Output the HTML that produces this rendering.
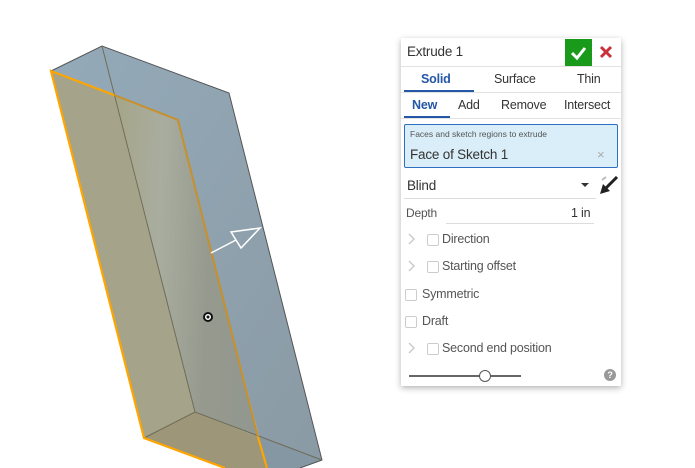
<!DOCTYPE html>
<html><head><meta charset="utf-8"><style>
body{margin:0;width:695px;height:468px;background:#fff;overflow:hidden;position:relative;font-family:"Liberation Sans",sans-serif;}
svg.scene{position:absolute;left:0;top:0}
.panel{position:absolute;left:401px;top:38px;width:220px;height:348px;background:#fff;box-shadow:0 2px 6px rgba(0,0,0,.3);font-size:12.5px;color:#333;letter-spacing:-0.2px}
.abs{position:absolute}
.cb{position:absolute;width:10px;height:10px;border:1px solid #ccc;border-radius:2px;background:#fff}
.g{color:#555}
.chev{position:absolute;width:10px;height:12px}
</style></head><body>
<svg class="scene" width="400" height="468" viewBox="0 0 400 468">
<defs>
<linearGradient id="blue" x1="0" y1="0" x2="1" y2="1"><stop offset="0" stop-color="#94aab9"/><stop offset="1" stop-color="#8a9aa4"/></linearGradient>
<linearGradient id="back" x1="0" y1="0" x2="1" y2="0.1"><stop offset="0" stop-color="#a6a588"/><stop offset="0.35" stop-color="#a9ad9f"/><stop offset="0.7" stop-color="#969a8e"/><stop offset="1" stop-color="#92978f"/></linearGradient>
</defs>
<polygon points="51,71 102,46 229,93 322,460 300,468 267,468 178,120 114,95" fill="url(#blue)"/>
<polygon points="51,71 114,95 195,412 144,438" fill="#a5a389"/>
<polygon points="114,95 178,120 258,437 195,412" fill="url(#back)"/>
<polygon points="144,438 195,412 258,437 267,468 225,468" fill="#9d9678"/>
<polygon points="258,437 322,460 300,468 267,468" fill="#8497a3"/>
<polyline points="51,71 102,46 229,93 322,460 300,468" fill="none" stroke="#555" stroke-width="1"/>
<line x1="102" y1="46" x2="195" y2="412" stroke="#6f6c58" stroke-width="1"/>
<polyline points="144,438 195,412 322,460" fill="none" stroke="#6f6c58" stroke-width="1"/>
<polyline points="114,95 178,120 258,437" fill="none" stroke="#c8902a" stroke-width="2"/>
<polyline points="114,95 51,71 144,438 225,468" fill="none" stroke="#ffa500" stroke-width="2.2"/>
<line x1="258" y1="437" x2="267" y2="468" stroke="#ffa500" stroke-width="2.2"/>
<polyline points="211,253 236,240" fill="none" stroke="#fff" stroke-width="1.5"/>
<polygon points="231,232 260,228 241,248" fill="none" stroke="#fff" stroke-width="1.5"/>
<circle cx="208" cy="317" r="5" fill="#111"/><circle cx="208" cy="317" r="3" fill="#fff"/><circle cx="208" cy="317" r="1.5" fill="#111"/>
</svg>
<div class="panel">
<div class="abs" style="left:6px;top:6px;font-size:13.5px;color:#333">Extrude 1</div>
<div class="abs" style="left:164px;top:1px;width:27px;height:27px;background:#1a9a1a"><svg width="27" height="27"><polyline points="7,14 12,19 20,9" fill="none" stroke="#fff" stroke-width="3"/></svg></div>
<div class="abs" style="left:198px;top:7px"><svg width="14" height="14"><path d="M2 2L12 12M12 2L2 12" stroke="#c9313d" stroke-width="3"/></svg></div>
<div class="abs" style="left:0;top:28px;width:220px;height:1px;background:#e2e2e2"></div>
<div class="abs" style="left:20px;top:34px;color:#2457a5;font-weight:bold">Solid</div>
<div class="abs" style="left:93px;top:34px">Surface</div>
<div class="abs" style="left:176px;top:34px">Thin</div>
<div class="abs" style="left:3px;top:52px;width:70px;height:2px;background:#2457a5"></div>
<div class="abs" style="left:0;top:54px;width:220px;height:1px;background:#e2e2e2"></div>
<div class="abs" style="left:11px;top:60px;color:#2457a5;font-weight:bold">New</div>
<div class="abs" style="left:57px;top:60px">Add</div>
<div class="abs" style="left:100px;top:60px">Remove</div>
<div class="abs" style="left:163px;top:60px">Intersect</div>
<div class="abs" style="left:3px;top:78px;width:46px;height:2px;background:#2457a5"></div>
<div class="abs" style="left:0;top:80px;width:220px;height:1px;background:#e2e2e2"></div>
<div class="abs" style="left:3px;top:86px;width:212px;height:42px;background:#d9eef8;border:1px solid #2f6fc0;border-radius:2px">
<div class="abs" style="left:5px;top:4px;font-size:8.5px;color:#555;letter-spacing:0">Faces and sketch regions to extrude</div>
<div class="abs" style="left:5px;top:22px;font-size:13.5px;color:#333">Face of Sketch 1</div>
<div class="abs" style="left:192px;top:22px;color:#aaa;font-size:13px">×</div>
</div>
<div class="abs" style="left:6px;top:140px;font-size:13.5px">Blind</div>
<div class="abs" style="left:180px;top:145px;width:0;height:0;border-left:4px solid transparent;border-right:4px solid transparent;border-top:4px solid #333"></div>
<div class="abs" style="left:3px;top:160px;width:192px;height:1px;background:#ddd"></div>
<svg class="abs" style="left:196px;top:138px" width="22" height="20"><line x1="5" y1="4" x2="9" y2="1" stroke="#bbb" stroke-width="2"/><line x1="20" y1="1" x2="9" y2="12" stroke="#222" stroke-width="3"/><polygon points="3,18 6,8 13,15" fill="#222"/></svg>
<div class="abs g" style="left:5px;top:168px;font-size:12px">Depth</div>
<div class="abs" style="left:170px;top:168px">1 in</div>
<div class="abs" style="left:45px;top:185px;width:148px;height:1px;background:#ddd"></div>
<svg class="chev" style="left:6px;top:195px"><polyline points="2,1 7,6 2,11" fill="none" stroke="#ccc" stroke-width="1.5"/></svg><div class="cb" style="left:26px;top:196px"></div><div class="abs g" style="left:41px;top:194px">Direction</div>
<svg class="chev" style="left:6px;top:222px"><polyline points="2,1 7,6 2,11" fill="none" stroke="#ccc" stroke-width="1.5"/></svg><div class="cb" style="left:26px;top:223px"></div><div class="abs g" style="left:41px;top:221px">Starting offset</div>
<div class="cb" style="left:4px;top:251px"></div><div class="abs g" style="left:21px;top:249px">Symmetric</div>
<div class="cb" style="left:4px;top:278px"></div><div class="abs g" style="left:21px;top:276px">Draft</div>
<svg class="chev" style="left:6px;top:304px"><polyline points="2,1 7,6 2,11" fill="none" stroke="#ccc" stroke-width="1.5"/></svg><div class="cb" style="left:26px;top:305px"></div><div class="abs g" style="left:41px;top:303px">Second end position</div>
<div class="abs" style="left:8px;top:337px;width:112px;height:2px;background:#666"></div>
<div class="abs" style="left:78px;top:332px;width:10px;height:10px;border:1px solid #555;border-radius:50%;background:#fff"></div>
<div class="abs" style="left:203px;top:331px;width:12px;height:12px;border-radius:50%;background:#999;color:#fff;font-size:9px;font-weight:bold;text-align:center;line-height:12px">?</div>
</div>
</body></html>
